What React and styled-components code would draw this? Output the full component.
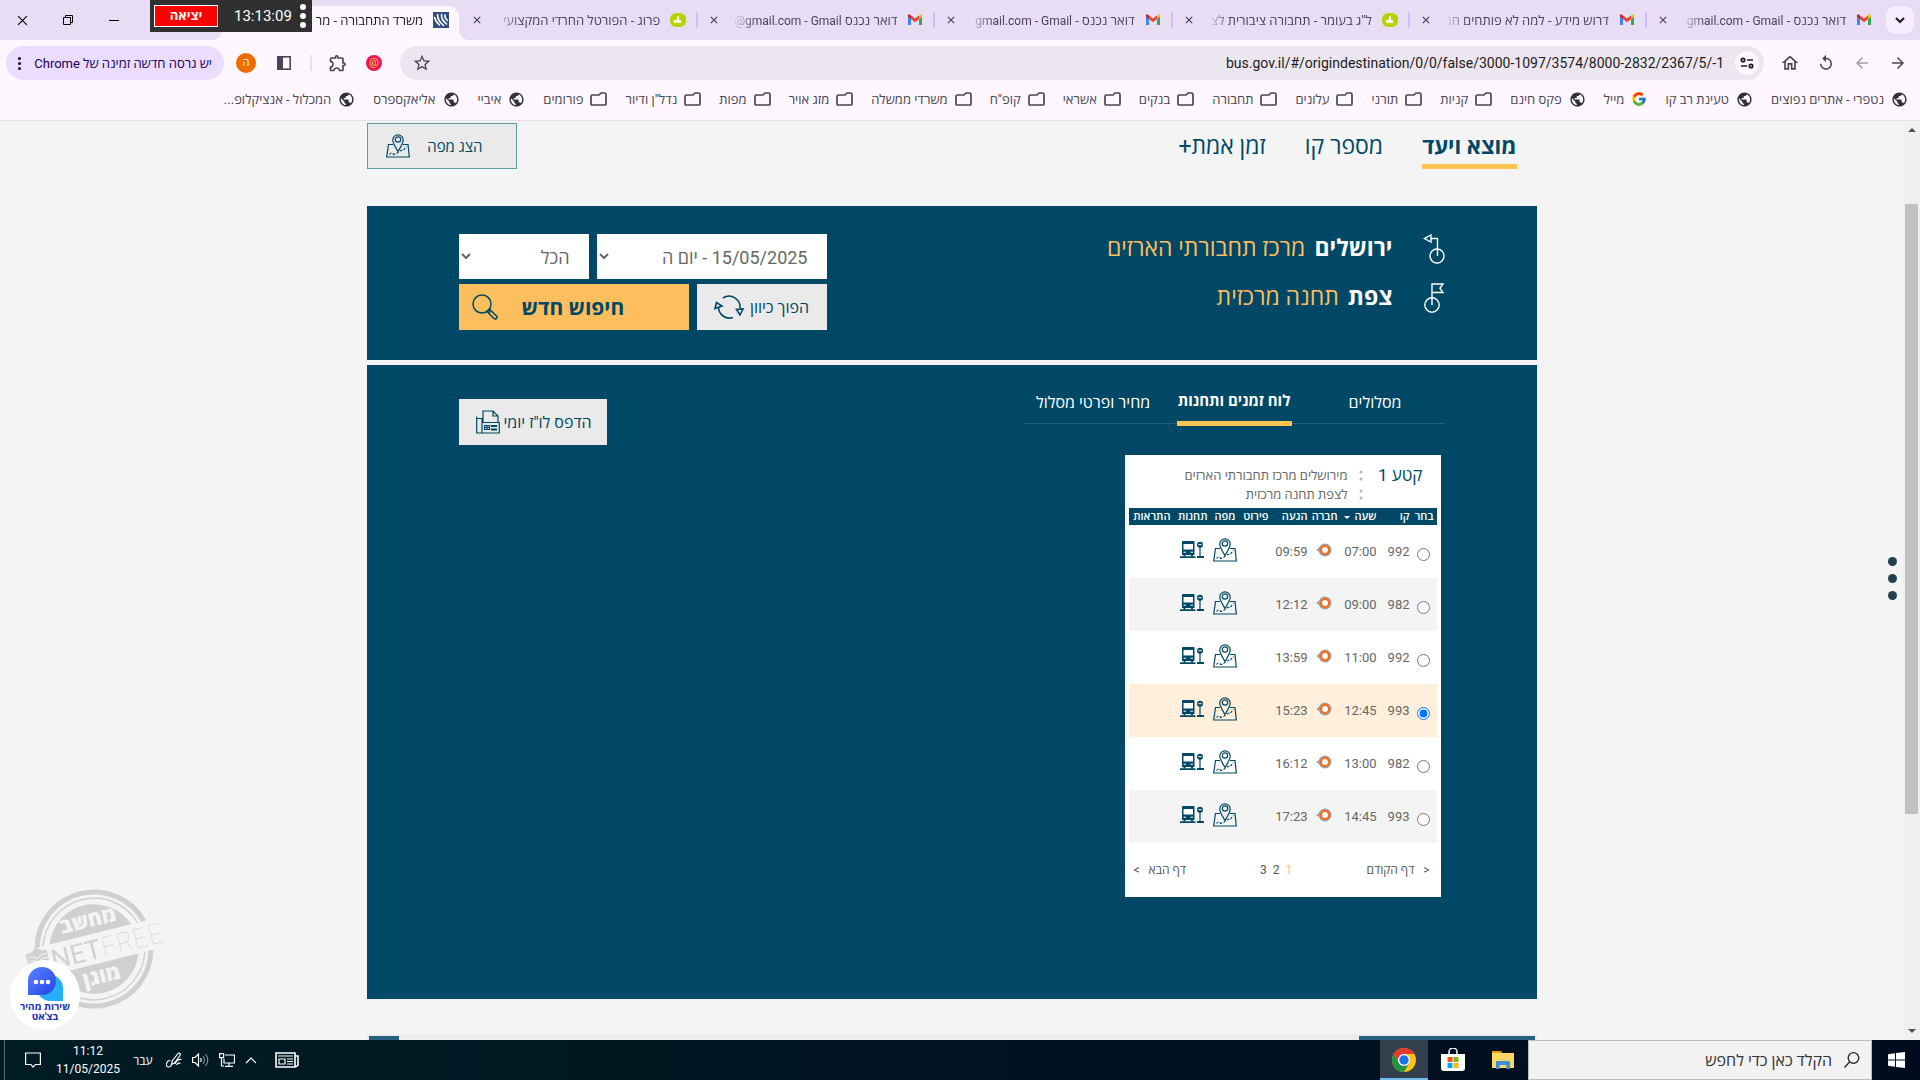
import styled, { createGlobalStyle, css } from "styled-components";
import { useState } from "react";
import { FcGoogle } from "react-icons/fc";
import {
  MdPublic,
  MdArrowForward,
  MdArrowBack,
  MdReplay,
  MdOutlineHome,
  MdStarBorder,
  MdOutlineExtension,
} from "react-icons/md";

const FONT = `Roboto, "Open Sans", "Liberation Sans", sans-serif`;

const NAVY = "#004865";
const ORANGE = "#fdbe5d";

const GlobalStyle = createGlobalStyle`
  *, *::before, *::after {
    box-sizing: border-box;
  }
  body {
    margin: 0;
    font-family: ${FONT};
  }
  button, input, select {
    font-family: inherit;
    margin: 0;
  }
  button {
    border: 0;
    padding: 0;
    background: none;
    color: inherit;
  }
  a {
    color: inherit;
    text-decoration: none;
  }
  svg {
    display: block;
    flex-shrink: 0;
  }
`;

const Screen = styled.div`
  position: relative;
  display: flex;
  flex-direction: column;
  height: 100vh;
  overflow: hidden;
`;

/* ---------- browser window ---------- */

const TabStrip = styled.div`
  display: flex;
  align-items: center;
  height: 40px;
  padding: 0 6px;
  background: #e7def6;
`;

const TabSearch = styled.button`
  display: flex;
  align-items: center;
  justify-content: center;
  width: 28px;
  height: 28px;
  border-radius: 10px;
  background: #f6edff;
`;

const Tabs = styled.div`
  flex: 1;
  display: flex;
  align-self: stretch;
  padding: 6px 4px 0 0;
`;

const Tab = styled.div`
  flex: 1;
  min-width: 0;
  display: flex;
  align-items: center;
  gap: 10px;
  height: 34px;
  padding: 0 10px 6px;
  font-size: 13px;
  color: #4a4458;
  background: linear-gradient(#d0bcff, #d0bcff) no-repeat left 6px / 2px 16px;

  ${({ $active }) =>
    $active &&
    css`
      position: relative;
      color: #1d1b20;
      background: #fef7ff;
      border-radius: 10px 10px 0 0;

      &::before,
      &::after {
        content: "";
        position: absolute;
        bottom: 0;
        width: 10px;
        height: 10px;
      }
      &::before {
        right: -10px;
        background: radial-gradient(circle at 100% 0, transparent 10px, #fef7ff 10px);
      }
      &::after {
        left: -10px;
        background: radial-gradient(circle at 0 0, transparent 10px, #fef7ff 10px);
      }
    `}

  ${({ $plain }) => $plain && "background: none;"}
`;

const TabTitle = styled.span`
  flex: 1;
  overflow: hidden;
  white-space: nowrap;
  mask-image: linear-gradient(to right, transparent, #000 24px);

  bdi {
    font-size: 12px;
  }
`;

const CloseTab = styled.button`
  display: flex;
  align-items: center;
  justify-content: center;
  width: 16px;
  height: 16px;
`;

const WindowButtons = styled.div`
  display: flex;
  direction: ltr;
  width: 216px;
`;

const WindowButton = styled.button`
  display: flex;
  align-items: center;
  justify-content: center;
  width: 46px;
  height: 34px;
  &:first-child {
    width: 32px;
  }
  &:nth-child(2) {
    width: 60px;
  }
  &:last-child {
    width: 32px;
  }
`;

const SessionTimer = styled.div`
  position: absolute;
  top: 0;
  left: 150px;
  z-index: 3;
  display: flex;
  direction: ltr;
  align-items: center;
  gap: 8px;
  width: 162px;
  height: 32px;
  padding: 0 4px;
  background: #303030;
  color: #fff;
  font-size: 15px;
`;

const ExitButton = styled.button`
  width: 64px;
  height: 22px;
  margin-right: 8px;
  border: 1px solid #fff;
  background: #f00;
  color: #fff;
  font-size: 13px;
  font-weight: 700;
  line-height: 18px;
`;

const Toolbar = styled.div`
  display: flex;
  align-items: center;
  height: 46px;
  padding: 0 6px;
  gap: 4px;
  background: #fef7ff;
  color: #4a4458;
`;

const ToolButton = styled.button`
  display: flex;
  align-items: center;
  justify-content: center;
  width: 32px;
  height: 32px;
  opacity: ${({ $dim }) => ($dim ? 0.5 : 1)};
`;

const AddressBar = styled.div`
  flex: 1;
  display: flex;
  align-items: center;
  height: 34px;
  margin: 0 6px;
  padding: 0 5px 0 6px;
  gap: 11px;
  border-radius: 17px;
  background: #ece6f0;
`;

const SiteInfo = styled.button`
  display: flex;
  align-items: center;
  justify-content: center;
  width: 24px;
  height: 24px;
  border-radius: 50%;
  background: #fef7ff;
`;

const AddressInput = styled.input`
  flex: 1;
  direction: ltr;
  text-align: right;
  border: 0;
  padding: 0;
  outline: 0;
  background: none;
  color: #1d1b20;
  font-size: 14px;
`;

const Divider = styled.span`
  width: 2px;
  height: 16px;
  margin: 0 6px;
  background: #e8def8;
`;

const Avatar = styled.button`
  display: flex;
  align-items: center;
  justify-content: center;
  width: ${({ $size }) => $size}px;
  height: ${({ $size }) => $size}px;
  margin: 0 8px;
  border-radius: 50%;
  background: ${({ $color }) => $color};
  color: ${({ $ink }) => $ink};
  font-size: 11px;
  line-height: 12px;
`;

const UpdateButton = styled.button`
  display: flex;
  align-items: center;
  justify-content: space-between;
  width: 218px;
  height: 34px;
  padding: 0 12px;
  border-radius: 17px;
  background: #eaddff;
  color: #21005d;
  font-size: 13px;
`;

const Bookmarks = styled.nav`
  display: flex;
  align-items: center;
  gap: 18px;
  height: 35px;
  padding: 0 12px 8px 0;
  border-bottom: 1px solid #e3dfeb;
  background: #fef7ff;
  color: #49454f;
  font-size: 13px;
`;

const Bookmark = styled.a`
  display: flex;
  align-items: center;
  gap: 7px;
  white-space: nowrap;
`;

/* ---------- site ---------- */

const Viewport = styled.div`
  position: relative;
  flex: 1;
  min-height: 0;
  display: flex;
  background: #f4f4f4;
`;

const ScrollTrack = styled.div`
  display: flex;
  flex-direction: column;
  align-items: center;
  width: 17px;
  padding: 7px 0;
  background: #f0f0f0;
`;

const ScrollThumb = styled.div`
  width: 13px;
  height: 67.4%;
  margin: 72px 0 auto;
  background: #c1c1c1;
`;

const ScrollArrow = styled.span`
  border: 4px solid transparent;
  border-top-width: 0;
  border-bottom: 4px solid #505050;
  transform: ${({ $down }) => ($down ? "rotate(180deg)" : "none")};
`;

const Site = styled.main`
  flex: 1;
  overflow: hidden;
  color: ${NAVY};
`;

const Container = styled.div`
  width: 100%;
  max-width: 1170px;
  margin: 0 auto;
`;

const TopRow = styled.div`
  display: flex;
  justify-content: space-between;
  align-items: flex-start;
  height: 85px;
  padding: 2px 20px 0 0;
`;

const ModeTabs = styled.div`
  display: flex;
  gap: 39px;
`;

const ModeTab = styled.a`
  height: 46px;
  font-size: 23px;
  line-height: 48px;
  ${({ $active }) =>
    $active &&
    css`
      font-size: 22px;
      font-weight: 700;
      border-bottom: 5px solid #fdc44f;
    `}
`;

const ActionButton = styled.button`
  display: flex;
  align-items: center;
  justify-content: center;
  gap: 4px;
  width: ${({ $width }) => $width}px;
  height: 46px;
  padding-left: 2px;
  background: #eaeaea;
  color: ${NAVY};
  font-size: 16px;
`;

const SwapButton = styled(ActionButton)`
  gap: 6px;
  padding-left: 0;
`;

const ShowMapButton = styled(ActionButton)`
  justify-content: space-between;
  padding: 0 33px 0 18px;
  border: 1px solid #5f9ea0;
  font-size: 15px;
`;

const NewSearchButton = styled(ActionButton)`
  justify-content: flex-end;
  gap: 24px;
  padding-left: 13px;
  background: ${ORANGE};
  font-size: 21px;
  font-weight: 700;
`;

const Panel = styled.section`
  display: flex;
  justify-content: space-between;
  align-items: flex-start;
  padding: 28px 92px 0;
  background: ${NAVY};
`;

const SearchPanel = styled(Panel)`
  height: 154px;
  margin-bottom: 5px;
`;

const ResultPanel = styled(Panel)`
  height: 634px;
  padding-top: 34px;
`;

const Places = styled.div`
  display: flex;
  flex-direction: column;
  gap: 19px;
`;

const Place = styled.div`
  display: flex;
  height: 30px;
  font-size: 23px;
  line-height: 29px;
  color: ${ORANGE};

  svg {
    margin-left: 30px;
  }
  strong {
    margin-left: 9px;
    color: #fff;
  }
`;

const Controls = styled.div`
  display: flex;
  flex-direction: column;
  gap: 5px;
`;

const ControlRow = styled.div`
  display: flex;
  gap: 8px;
`;

const SelectBox = styled.select`
  width: ${({ $width }) => $width}px;
  height: 45px;
  padding: 2px 15px 0 0;
  border: 0;
  border-radius: 0;
  background: #fff;
  color: #666;
  font-size: 18px;
`;

const ResultTabs = styled.div`
  display: flex;
  gap: 14px;
  width: 421px;
  height: 25px;
  margin-bottom: 31px;
  background: linear-gradient(#1f5f7a, #1f5f7a) no-repeat bottom / 100% 1px;
`;

const ResultTab = styled.a`
  flex: 1;
  height: 27px;
  text-align: center;
  white-space: nowrap;
  color: #fff;
  font-size: 16px;
  line-height: 8px;
  ${({ $active }) =>
    $active &&
    css`
      flex: 0 0 115px;
      font-size: 15px;
      font-weight: 700;
      line-height: 4px;
      border-bottom: 5px solid #fdc44f;
    `}
`;

const Card = styled.div`
  width: 316px;
  height: 442px;
  margin-right: 4px;
  padding: 0 4px;
  background: #fff;
`;

const CardHead = styled.div`
  display: flex;
  height: 53px;
  padding: 11px 14px 0 0;
  color: #666;
  font-size: 13px;
  line-height: 19px;

  h2 {
    width: 60px;
    margin: 0;
    color: ${NAVY};
    font-size: 17px;
    font-weight: 400;
    line-height: 19px;
  }
  svg {
    margin: 3px 0 0 11px;
  }
`;

const Timetable = styled.table`
  width: 308px;
  table-layout: fixed;
  border-collapse: collapse;

  th {
    height: 17px;
    padding: 0 3px 0 0;
    background: ${NAVY};
    color: #fff;
    font-size: 11px;
    font-weight: 600;
    line-height: 17px;
    text-align: right;
    white-space: nowrap;
  }
`;

const SortMark = styled.span`
  display: inline-block;
  margin-right: 5px;
  vertical-align: middle;
  border: 3px solid transparent;
  border-bottom-width: 0;
  border-top-color: #fff;
`;

const TripRow = styled.tr`
  height: 53px;
  background: ${({ $picked, $even }) => ($picked ? "#ffefdb" : $even ? "#f4f4f4" : "#fff")};
  color: #666;
  font-size: 13px;

  td {
    padding: 0 3px 0 0;
  }
  input {
    display: block;
    width: 13px;
    height: 13px;
    margin: 6px 4px 0 0;
  }
`;

const IconCell = styled.td`
  && {
    padding: 0 0 4px;
  }
  svg {
    margin: 0 auto;
  }
`;

const CompanyCell = styled(IconCell)`
  && {
    padding: 0 4px 4px 0;
  }
`;

const Pager = styled.div`
  display: flex;
  justify-content: space-between;
  padding: 17px 7px 0 5px;
`;

const PageButton = styled.button`
  display: flex;
  gap: 9px;
  line-height: 20px;
  font-size: 12px;
  color: ${({ $current }) => ($current ? "#fdbe86" : "#555")};
`;

const Chevron = styled.span`
  direction: ltr;
  unicode-bidi: isolate;
`;

const PageNumbers = styled.div`
  display: flex;
  gap: 6px;
`;

const NextBlocks = styled.div`
  display: flex;
  justify-content: space-between;
  height: 6px;
  margin-top: 35px;
  padding: 2px 2px 0;
  background: #ececec;
`;

const NextBlock = styled.div`
  width: ${({ $width }) => $width}px;
  background: #23637f;
`;

const SideMenu = styled.button`
  position: absolute;
  right: 23px;
  top: 436px;
  display: flex;
  flex-direction: column;
  gap: 8px;

  span {
    width: 9px;
    height: 9px;
    border-radius: 50%;
    background: #24404f;
  }
`;

const ChatButton = styled.button`
  position: absolute;
  left: 10px;
  bottom: 10px;
  display: flex;
  flex-direction: column;
  align-items: center;
  width: 70px;
  height: 70px;
  padding: 6px 0 0;
  border-radius: 50%;
  background: #fff;
  color: #2330b8;
  font-size: 10px;
  font-weight: 700;
  line-height: 10px;

  svg {
    margin-bottom: 1px;
  }
`;

const Watermark = styled.svg`
  position: absolute;
  left: 24px;
  bottom: 30px;
  overflow: visible;
  pointer-events: none;
`;

/* ---------- taskbar ---------- */

const Taskbar = styled.footer`
  display: flex;
  height: 40px;
  background: linear-gradient(to right, #001c24, #000c1e);
  color: #fff;
`;

const StartButton = styled.button`
  display: flex;
  align-items: center;
  justify-content: center;
  width: 48px;
`;

const TaskSearch = styled.label`
  display: flex;
  align-items: center;
  gap: 12px;
  width: 344px;
  padding: 0 11px;
  border: 1px solid #bdbdbd;
  background: #f2f2f2;
  color: #222;

  input {
    width: 100%;
    border: 0;
    padding: 0;
    outline: 0;
    background: none;
    font-size: 16px;
  }
  input::placeholder {
    color: #333;
    opacity: 1;
  }
`;

const TaskApp = styled.button`
  display: flex;
  align-items: center;
  justify-content: center;
  width: 50px;
  ${({ $open }) =>
    $open &&
    css`
      width: 48px;
      background: #333f4c;
      border-bottom: 2px solid #76b9ed;
      border-top: 2px solid #333f4c;
    `}
`;

const Tray = styled.div`
  display: flex;
  align-items: center;
  gap: 10px;
  margin-right: auto;
  font-size: 12px;
`;

const NewsButton = styled.button`
  margin-left: 8px;
`;

const Language = styled.button`
  width: 22px;
  margin-right: 2px;
  font-size: 12px;
`;

const Clock = styled.div`
  width: 68px;
  text-align: center;
  line-height: 18px;
`;

const ActionCenter = styled.button`
  display: flex;
  align-items: center;
  width: 40px;
  height: 40px;
  border-left: 1px solid #5d6c72;
  margin-left: 4px;
  padding-right: 3px;
`;

/* ---------- icons ---------- */

const GmailIcon = () => (
  <svg width="16" height="16" viewBox="0 0 16 16">
    <path d="M1 4v9h3V6.500z" fill="#4285f4" />
    <path d="M15 4v9h-3V6.500z" fill="#34a853" />
    <path d="M12 3.500l2-1.200c.6-.3 1 .2 1 .9v1.600L12 7z" fill="#fbbc04" />
    <path d="M4 3.500L2 2.300c-.6-.3-1 .2-1 .9v1.600L4 7z" fill="#c5221f" />
    <path d="M4 3.500L8 6.600l4-3.100V7L8 10.200 4 7z" fill="#ea4335" />
  </svg>
);

const ForumIcon = () => (
  <svg width="16" height="16" viewBox="0 0 16 16">
    <rect x="0" y="1" width="16" height="14" rx="6" fill="#b5d300" />
    <path d="M7 4.500q1.500-1 2 .5v3l2 .5q1 2.500-1 2.500H5q-2.500-1-1-2.500l3-1z" fill="#fff" />
  </svg>
);

const MinistryIcon = () => (
  <svg width="16" height="16" viewBox="0 0 16 16">
    <path d="M0 0h16v16H0z" fill="#2e4f7c" />
    <g fill="none" stroke="#fff" strokeWidth="1.600" strokeLinecap="round">
      <path d="M1.500 5.500q1 4 5 7.500" />
      <path d="M4.500 2.500q0 6 6 11" />
      <path d="M8.500 2.500q-.5 5 5 9.500" />
      <path d="M12 3q-.5 3 2.500 5.500" />
    </g>
  </svg>
);

const CloseIcon = ({ size = 8, stroke = 1.5 }) => (
  <svg width={size} height={size} viewBox="0 0 10 10" fill="none" stroke="currentColor" strokeWidth={stroke}>
    <path d="M1 1l8 8M9 1l-8 8" />
  </svg>
);

const FolderIcon = () => (
  <svg width="17" height="14" viewBox="0 0 17 14" fill="none" stroke="currentColor" strokeWidth="1.700">
    <path d="M1 4.500a1.500 1.500 0 0 1 1.500-1.500H9l2-2h3.500A1.500 1.500 0 0 1 16 2.500V12a1 1 0 0 1-1 1H2a1 1 0 0 1-1-1z" />
  </svg>
);

const TuneIcon = () => (
  <svg width="14" height="12" viewBox="0 0 14 12" fill="none" stroke="#1d1b20" strokeWidth="1.700">
    <circle cx="3" cy="3" r="1.700" />
    <circle cx="11" cy="9" r="1.700" />
    <path d="M7 3h6M1 9h6" />
  </svg>
);

const SidePanelIcon = () => (
  <svg width="16" height="16" viewBox="0 0 16 16">
    <rect x="1.800" y="1.800" width="12.400" height="12.400" fill="none" stroke="currentColor" strokeWidth="1.600" />
    <path d="M2 2h5v12H2z" fill="currentColor" />
  </svg>
);

const VerticalDots = ({ r = 1.5, gap = 5, color = "currentColor" }) => (
  <svg width={r * 2} height={gap * 2 + r * 2} fill={color}>
    {[0, 1, 2].map((i) => (
      <circle key={i} cx={r} cy={r + gap * i} r={r} />
    ))}
  </svg>
);

const MapIcon = () => (
  <svg width="24" height="24" viewBox="0 0 24 24" fill="none" stroke={NAVY} strokeWidth="1.200">
    <path d="M7 10.500H2.500L.7 23h22.600L22 10.500h-5" />
    <path d="M12 17.500C9.500 13 6.800 9.500 6.800 6a5.200 5.200 0 0 1 10.400 0c0 3.500-2.700 7-5.200 11.500z" />
    <circle cx="12" cy="5.500" r="2.700" />
    <path d="M3.500 20.500q2-3 4 0 3-.5 5-2.500 3-2 5-2l3-3.500" strokeDasharray="2.500 1.500" />
  </svg>
);

const StationIcon = () => (
  <svg width="24" height="18" viewBox="0 0 24 18" fill={NAVY}>
    <path d="M3 0h10.500c.8 0 1 .5 1 1v13h-1.500v1.500h-2V14H5.500v1.500h-2V14H2V1c0-.5.400-1 1-1z" />
    <path d="M3.500 3h9.500v5.500H3.500z" fill="#fff" />
    <path d="M3.500 11.200h2.500M10.500 11.200H13" stroke="#fff" strokeWidth="1" />
    <circle cx="20" cy="3.700" r="3" />
    <path d="M18.300 3.700h3.400" stroke="#fff" strokeWidth="1" />
    <path d="M19.400 6h1.200v9.500h-1.200zM0 15.200h15.500V17H0zM17 15h7v2h-7z" />
  </svg>
);

const CompanyIcon = () => (
  <svg width="16" height="14" viewBox="0 0 16 14">
    <path d="M0 7l4-2.500v5z" fill="#9aa3aa" />
    <circle cx="9" cy="7" r="6.500" fill="#9aa3aa" />
    <circle cx="9" cy="7" r="4" fill="#fff" stroke="#ff6a13" strokeWidth="2.200" />
  </svg>
);

const OriginIcon = () => (
  <svg width="22" height="30" viewBox="0 0 22 30" fill="none" stroke="#fff" strokeWidth="1.400">
    <circle cx="14" cy="22" r="7" />
    <path d="M14.500 22V4.500H8M8 1v7L1.500 4.500z" />
  </svg>
);

const TargetIcon = () => (
  <svg width="22" height="30" viewBox="0 0 22 30" fill="none" stroke="#fff" strokeWidth="1.400">
    <circle cx="9" cy="22" r="7.200" />
    <path d="M9 22V1h11l-3 4.300L20 9.500H9" />
  </svg>
);

const SwapIcon = () => (
  <svg width="30" height="24" viewBox="0 0 30 24" fill="none" stroke={NAVY} strokeWidth="1.600">
    <path d="M9 3A11 11 0 0 1 26 13.500M4.500 12A11 11 0 0 0 19 22.500" />
    <path d="M22.500 14.500L26 20l3-6zM1 13.500L2.500 7.500 8 11z" />
  </svg>
);

const SearchIcon = () => (
  <svg width="26" height="26" viewBox="0 0 26 26" fill="none" stroke={NAVY} strokeWidth="1.500">
    <circle cx="10" cy="10" r="9" />
    <path d="M15 17.500l2.500-2.500 7 7c1.500 1.500-.8 4-2.500 2.500zM16 16l2.500 2.500" />
  </svg>
);

const PrintIcon = () => (
  <svg width="24" height="24" viewBox="0 0 24 24" fill="none" stroke={NAVY} strokeWidth="1.200">
    <path d="M.7 6.500V23h22.600V12.500H6V23M.7 8.500H6v4M7 12V1h10l5 5v6M17 1v5h5" />
    <path d="M8.500 15.500h5v4h-5zM11 15.500v4M8.500 17.500h5M15.500 15.500h5v1h-5zM15.500 19h5v1h-5z" />
  </svg>
);

const ChatIcon = () => (
  <svg width="36" height="35" viewBox="0 0 36 35">
    <defs>
      <linearGradient id="bubble" x1="0" y1="0" x2="1" y2="1">
        <stop offset="0" stopColor="#5a86ff" />
        <stop offset="1" stopColor="#2440e8" />
      </linearGradient>
    </defs>
    <path d="M36 35H24a13 13 0 1 1 12-13z" fill="#27aef8" />
    <path d="M1 29V15a14 14 0 1 1 14 14z" fill="url(#bubble)" />
    <g fill="#fff">
      <circle cx="9" cy="16" r="2.300" />
      <circle cx="15" cy="16" r="2.300" />
      <circle cx="21" cy="16" r="2.300" />
    </g>
  </svg>
);

const NetfreeStamp = () => (
  <Watermark width="142" height="122" viewBox="0 0 142 122">
    <g transform="rotate(-14 70 61)">
      <g opacity=".14">
        <g fill="none" stroke="#000">
          <path d="M15 46a57 57 0 0 1 110 0M15 76a57 57 0 0 0 110 0" strokeWidth="5" />
          <path d="M21.300 46a51 51 0 0 1 97.400 0M21.300 76a51 51 0 0 0 97.400 0" strokeWidth="1.500" />
        </g>
        <path d="M28 46a44.500 44.500 0 0 1 84 0zM28 76a44.500 44.500 0 0 0 84 0z" />
        <path d="M2 50q9 0 11-5 3 5 11 5 1 20-11 26Q1 70 2 50z" />
        <g direction="ltr" fontSize="27">
          <text x="26" y="71">NET</text>
          <text x="77" y="71" fontFamily="Inter, Roboto" fontWeight="100">FREE</text>
        </g>
      </g>
      <path d="M3 54q6-2 10 3 4-5 10-3M3 58q6-2 10 3 4-5 10-3" fill="none" stroke="#f4f4f4" />
      <g fontWeight="800" fontSize="21" fill="#f4f4f4" textAnchor="middle">
        <text x="71" y="39">מחשב</text>
        <text x="71" y="96">מוגן</text>
      </g>
    </g>
  </Watermark>
);

const ChromeIcon = () => (
  <svg width="24" height="24" viewBox="0 0 24 24">
    <circle cx="12" cy="12" r="12" fill="#fbc116" />
    <path d="M12 6h10.400A12 12 0 0 0 1.600 6l5.200 9z" fill="#e33b2e" />
    <path d="M6.800 15L1.600 6A12 12 0 0 0 12 24l5.200-9z" fill="#229342" />
    <circle cx="12" cy="12" r="6" fill="#fff" />
    <circle cx="12" cy="12" r="4.700" fill="#1a73e8" />
  </svg>
);

const StoreIcon = () => (
  <svg width="24" height="24" viewBox="0 0 24 24">
    <path d="M8 6V4a4 4 0 0 1 8 0v2" fill="none" stroke="#fff" strokeWidth="1.500" />
    <path d="M0 6h24v14a3 3 0 0 1-3 3H3a3 3 0 0 1-3-3z" fill="#fff" />
    <path d="M6.500 9h5v5h-5z" fill="#f25022" />
    <path d="M12.500 9h5v5h-5z" fill="#7fba00" />
    <path d="M6.500 15h5v5h-5z" fill="#00a4ef" />
    <path d="M12.500 15h5v5h-5z" fill="#ffb900" />
  </svg>
);

const ExplorerIcon = () => (
  <svg width="22" height="18" viewBox="0 0 22 18">
    <path d="M0 0h9l1.500 2.500H0z" fill="#e5a00d" />
    <path d="M0 2h22v15H0z" fill="#ffd766" />
    <path d="M4 18v-7a1 1 0 0 1 1-1h12a1 1 0 0 1 1 1v7h-3.500v-4h-7v4z" fill="#3b8fd6" />
  </svg>
);

const WindowsIcon = () => (
  <svg width="17" height="16" viewBox="0 0 17 16" fill="#fff">
    <path d="M0 2.200l7-.9v6.200H0zM8 1.100L17 0v7.500H8zM0 8.500h7v6.200l-7-.9zM8 8.500h9V16l-9-1.100z" />
  </svg>
);

const trayStroke = { fill: "none", stroke: "#fff", strokeWidth: 1.2 };

const NewsIcon = () => (
  <svg width="24" height="16" viewBox="0 0 24 16" {...trayStroke}>
    <path d="M1 1h19v14H1zM20 4h3v9a2 2 0 0 1-3 1" strokeWidth="1.600" />
    <path d="M4 7h6v5H4zM3 4h15M12 7h6M12 9.500h6M12 12h6" />
  </svg>
);

const CaretIcon = () => (
  <svg width="12" height="8" viewBox="0 0 12 8" {...trayStroke}>
    <path d="M1 7l5-5 5 5" />
  </svg>
);

const NetworkIcon = () => (
  <svg width="16" height="14" viewBox="0 0 16 14" {...trayStroke}>
    <path d="M6 2h9.500v8H5V6M10 10v3M6 13.400h8M.6.600h4v4h-4zM2.500 5v8H5" />
  </svg>
);

const VolumeIcon = () => (
  <svg width="17" height="14" viewBox="0 0 17 14" {...trayStroke}>
    <path d="M.6 4.500h2.500L6.500 1v12L3 9.500H.6zM8.500 5q1.500 2 0 4" />
    <path d="M11 3q3 4 0 8M13.500 1q4.500 6 0 12" opacity=".5" />
  </svg>
);

const PenIcon = () => (
  <svg width="16" height="16" viewBox="0 0 16 16" {...trayStroke}>
    <path d="M5.500 12.500l1-4 6-7.500q2.500 0 1.500 2.500l-5.500 7.500zM4.500 8.500q-3.500 0-4 3.500-.5 3 2 3t3-2.500M9 12q2-5 6.500-4.500M10.500 13q2-3 4-1.500" />
  </svg>
);

const NotificationIcon = () => (
  <svg width="16" height="16" viewBox="0 0 16 16" {...trayStroke}>
    <path d="M.6 1h14.800v11.500h-5L8 15l-2-2.500H.6z" />
  </svg>
);

/* ---------- data ---------- */

const TABS = [
  { icon: GmailIcon, title: "דואר נכנס - ", account: "gmail.com - Gmail" },
  { icon: GmailIcon, title: "דרוש מידע - למה לא פותחים חנ" },
  { icon: ForumIcon, title: 'ל"ג בעומר - תחבורה ציבורית לצ' },
  { icon: GmailIcon, title: "דואר נכנס - ", account: "gmail.com - Gmail" },
  { icon: GmailIcon, title: "דואר נכנס ", account: "@gmail.com - Gmail" },
  { icon: ForumIcon, title: "פרוג - הפורטל החרדי המקצועי" },
];

const BOOKMARKS = [
  ["globe", "נטפרי - אתרים נפוצים"],
  ["globe", "טעינת רב קו"],
  ["google", "מייל"],
  ["globe", "פקס חינם"],
  ["folder", "קניות"],
  ["folder", "תורני"],
  ["folder", "עלונים"],
  ["folder", "תחבורה"],
  ["folder", "בנקים"],
  ["folder", "אשראי"],
  ["folder", 'קופ"ח'],
  ["folder", "משרדי ממשלה"],
  ["folder", "מזג אויר"],
  ["folder", "מפות"],
  ["folder", 'נדל"ן ודיור'],
  ["folder", "פורומים"],
  ["globe", "איביי"],
  ["globe", "אליאקספרס"],
  ["globe", "המכלול - אנציקלופ..."],
];

const BOOKMARK_ICONS = {
  globe: <MdPublic size={17} color="#2f3136" />,
  google: <FcGoogle size={16} />,
  folder: <FolderIcon />,
};

const COLUMNS = [
  ["בחר", 24],
  ["קו", 33],
  ["שעה", 39],
  ["חברה", 30],
  ["הגעה", 39],
  ["פירוט", 33],
  ["מפה", 28],
  ["תחנות", 37],
  ["התראות", 45],
];

const SORTED_COLUMN = "שעה";

const TRIPS = [
  { line: 992, departs: "07:00", arrives: "09:59" },
  { line: 982, departs: "09:00", arrives: "12:12" },
  { line: 992, departs: "11:00", arrives: "13:59" },
  { line: 993, departs: "12:45", arrives: "15:23" },
  { line: 982, departs: "13:00", arrives: "16:12" },
  { line: 993, departs: "14:45", arrives: "17:23" },
];

/* ---------- parts ---------- */

const BrowserHeader = () => (
  <header>
    <TabStrip>
      <TabSearch aria-label="חיפוש כרטיסיות">
        <svg width="10" height="7" viewBox="0 0 10 7" fill="none" stroke="#1d1b20" strokeWidth="2">
          <path d="M1 1l4 4 4-4" />
        </svg>
      </TabSearch>
      <Tabs>
        {TABS.map(({ icon: TabIcon, title, account }, index) => (
          <Tab key={index} $plain={index === TABS.length - 1}>
            <TabIcon />
            <TabTitle>
              {title}
              {account && <bdi dir="ltr">{account}</bdi>}
            </TabTitle>
            <CloseTab aria-label="סגירה">
              <CloseIcon />
            </CloseTab>
          </Tab>
        ))}
        <Tab $active>
          <MinistryIcon />
          <TabTitle>משרד התחבורה - מר</TabTitle>
        </Tab>
      </Tabs>
      <WindowButtons>
        <WindowButton aria-label="סגור">
          <CloseIcon size={11} stroke={1} />
        </WindowButton>
        <WindowButton aria-label="שחזר">
          <svg width="10" height="10" viewBox="0 0 10 10" fill="none" stroke="#000">
            <path d="M.5 2.500h7v7h-7zM2.500 2.500v-2h7v7h-2" />
          </svg>
        </WindowButton>
        <WindowButton aria-label="מזער">
          <svg width="10" height="1">
            <path d="M0 0h10v1H0z" />
          </svg>
        </WindowButton>
      </WindowButtons>
    </TabStrip>

    <Toolbar>
      <ToolButton aria-label="הקודם">
        <MdArrowForward size={18} />
      </ToolButton>
      <ToolButton aria-label="הבא" $dim>
        <MdArrowBack size={18} />
      </ToolButton>
      <ToolButton aria-label="טעינה מחדש">
        <MdReplay size={18} />
      </ToolButton>
      <ToolButton aria-label="דף הבית">
        <MdOutlineHome size={20} />
      </ToolButton>
      <AddressBar>
        <SiteInfo aria-label="פרטי האתר">
          <TuneIcon />
        </SiteInfo>
        <AddressInput
          aria-label="כתובת"
          defaultValue="bus.gov.il/#/origindestination/0/0/false/3000-1097/3574/8000-2832/2367/5/-1"
        />
        <ToolButton aria-label="הוספה לסימניות">
          <MdStarBorder size={20} />
        </ToolButton>
      </AddressBar>
      <Avatar $size={16} $color="#e8175d" $ink="#ffc83d" aria-label="תוסף">
        @
      </Avatar>
      <ToolButton aria-label="תוספים">
        <MdOutlineExtension size={20} />
      </ToolButton>
      <Divider />
      <ToolButton aria-label="חלונית צד">
        <SidePanelIcon />
      </ToolButton>
      <Avatar $size={20} $color="#ef6c00" $ink="#fff" aria-label="פרופיל">
        ה
      </Avatar>
      <UpdateButton>
        יש גרסה חדשה זמינה של Chrome
        <VerticalDots />
      </UpdateButton>
    </Toolbar>

    <Bookmarks>
      {BOOKMARKS.map(([icon, label]) => (
        <Bookmark key={label} href="#">
          {BOOKMARK_ICONS[icon]}
          {label}
        </Bookmark>
      ))}
    </Bookmarks>
  </header>
);

const TripsTable = () => {
  const [picked, setPicked] = useState(3);

  return (
    <Timetable>
      <colgroup>
        {COLUMNS.map(([name, width]) => (
          <col key={name} width={width} />
        ))}
      </colgroup>
      <thead>
        <tr>
          {COLUMNS.map(([name]) => (
            <th key={name}>
              {name}
              {name === SORTED_COLUMN && <SortMark />}
            </th>
          ))}
        </tr>
      </thead>
      <tbody>
        {TRIPS.map(({ line, departs, arrives }, index) => (
          <TripRow key={departs} $picked={picked === index} $even={index % 2 === 1}>
            <td>
              <input
                type="radio"
                name="trip"
                aria-label={`קו ${line} ${departs}`}
                checked={picked === index}
                onChange={() => setPicked(index)}
              />
            </td>
            <td>{line}</td>
            <td>{departs}</td>
            <CompanyCell>
              <CompanyIcon />
            </CompanyCell>
            <td>{arrives}</td>
            <td />
            <IconCell>
              <MapIcon />
            </IconCell>
            <IconCell>
              <StationIcon />
            </IconCell>
            <td />
          </TripRow>
        ))}
      </tbody>
    </Timetable>
  );
};

const SegmentCard = () => (
  <Card>
    <CardHead>
      <h2>קטע 1</h2>
      <svg width="4" height="32" fill="#b5b5b5">
        {[3, 10, 22, 29].map((y) => (
          <circle key={y} cx="2" cy={y} r="1.500" />
        ))}
      </svg>
      <div>
        מירושלים מרכז תחבורתי הארזים
        <br />
        לצפת תחנה מרכזית
      </div>
    </CardHead>
    <TripsTable />
    <Pager>
      <PageButton>
        <Chevron>&gt;</Chevron>דף הקודם
      </PageButton>
      <PageNumbers>
        <PageButton $current>1</PageButton>
        <PageButton>2</PageButton>
        <PageButton>3</PageButton>
      </PageNumbers>
      <PageButton>
        דף הבא<Chevron>&lt;</Chevron>
      </PageButton>
    </Pager>
  </Card>
);

const SitePage = () => (
  <Site>
    <Container>
      <TopRow>
        <ModeTabs>
          <ModeTab href="#" $active>
            מוצא ויעד
          </ModeTab>
          <ModeTab href="#">מספר קו</ModeTab>
          <ModeTab href="#">זמן אמת+</ModeTab>
        </ModeTabs>
        <ShowMapButton $width={150}>
          הצג מפה
          <MapIcon />
        </ShowMapButton>
      </TopRow>

      <SearchPanel>
        <Places>
          <Place>
            <OriginIcon />
            <strong>ירושלים</strong>
            מרכז תחבורתי הארזים
          </Place>
          <Place>
            <TargetIcon />
            <strong>צפת</strong>
            תחנה מרכזית
          </Place>
        </Places>
        <Controls>
          <ControlRow>
            <SelectBox $width={230} aria-label="תאריך">
              <option>15/05/2025 - יום ה</option>
            </SelectBox>
            <SelectBox $width={130} aria-label="שעה">
              <option>הכל</option>
            </SelectBox>
          </ControlRow>
          <ControlRow>
            <SwapButton $width={130}>
              הפוך כיוון
              <SwapIcon />
            </SwapButton>
            <NewSearchButton $width={230}>
              חיפוש חדש
              <SearchIcon />
            </NewSearchButton>
          </ControlRow>
        </Controls>
      </SearchPanel>

      <ResultPanel>
        <div>
          <ResultTabs>
            <ResultTab href="#">מסלולים</ResultTab>
            <ResultTab href="#" $active>
              לוח זמנים ותחנות
            </ResultTab>
            <ResultTab href="#">מחיר ופרטי מסלול</ResultTab>
          </ResultTabs>
          <SegmentCard />
        </div>
        <ActionButton $width={148}>
          הדפס לו"ז יומי
          <PrintIcon />
        </ActionButton>
      </ResultPanel>
      <NextBlocks>
        <NextBlock $width={176} />
        <NextBlock $width={30} />
      </NextBlocks>
    </Container>
  </Site>
);

const WindowsTaskbar = () => (
  <Taskbar>
    <StartButton aria-label="התחל">
      <WindowsIcon />
    </StartButton>
    <TaskSearch>
      <svg width="16" height="16" viewBox="0 0 16 16" fill="none" stroke="#222" strokeWidth="1.300">
        <circle cx="9.500" cy="6" r="5.300" />
        <path d="M5.700 9.800L.5 15.500" />
      </svg>
      <input placeholder="הקלד כאן כדי לחפש" aria-label="חיפוש" />
    </TaskSearch>
    <TaskApp aria-label="סייר הקבצים">
      <ExplorerIcon />
    </TaskApp>
    <TaskApp aria-label="חנות">
      <StoreIcon />
    </TaskApp>
    <TaskApp aria-label="Chrome" $open>
      <ChromeIcon />
    </TaskApp>
    <Tray>
      <NewsButton aria-label="חדשות">
        <NewsIcon />
      </NewsButton>
      <CaretIcon />
      <NetworkIcon />
      <VolumeIcon />
      <PenIcon />
      <Language>עבר</Language>
      <Clock>
        11:12
        <br />
        11/05/2025
      </Clock>
      <ActionCenter aria-label="מרכז הפעולות">
        <NotificationIcon />
      </ActionCenter>
    </Tray>
  </Taskbar>
);

const App = () => (
  <Screen dir="rtl">
    <GlobalStyle />
    <SessionTimer>
      <ExitButton>יציאה</ExitButton>
      <span>13:13:09</span>
      <VerticalDots r={3} gap={9} color="#fff" />
    </SessionTimer>
    <BrowserHeader />
    <Viewport>
      <ScrollTrack>
        <ScrollArrow />
        <ScrollThumb />
        <ScrollArrow $down />
      </ScrollTrack>
      <SitePage />
      <SideMenu aria-label="תפריט">
        <span />
        <span />
        <span />
      </SideMenu>
      <NetfreeStamp />
      <ChatButton>
        <ChatIcon />
        שירות מהיר
        <br />
        בצ'אט
      </ChatButton>
    </Viewport>
    <WindowsTaskbar />
  </Screen>
);

export default App;
